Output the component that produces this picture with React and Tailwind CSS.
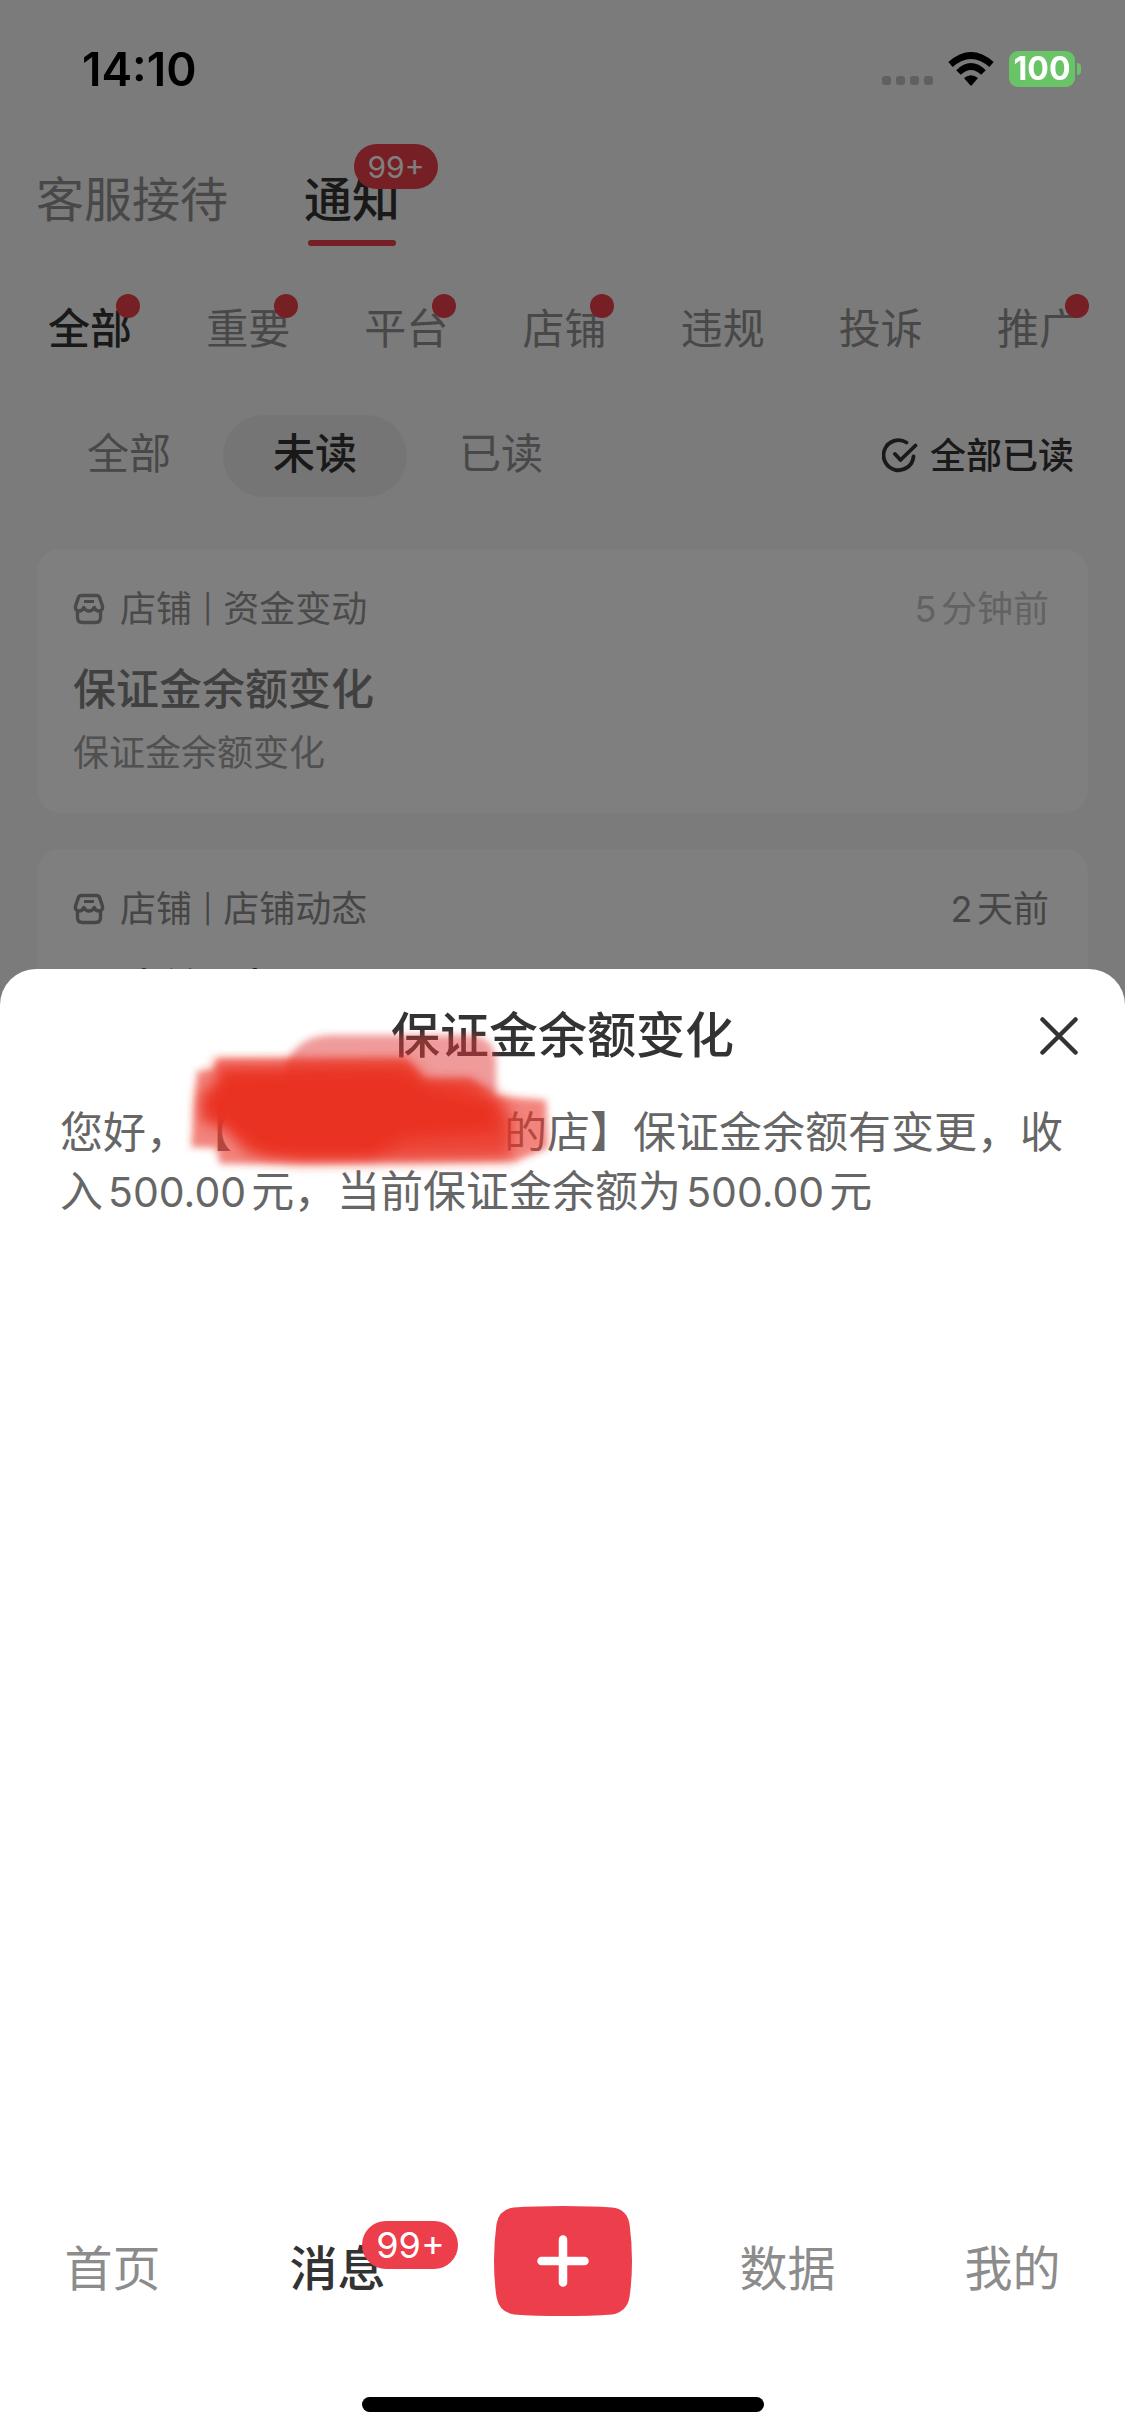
import { useId } from "react";
import clsx from "clsx";

const mainTabs = [
  { name: "客服接待" },
  { name: "通知", badge: "99+", active: true },
];

const categories = [
  { name: "全部", dot: true, active: true },
  { name: "重要", dot: true },
  { name: "平台", dot: true },
  { name: "店铺", dot: true },
  { name: "违规" },
  { name: "投诉" },
  { name: "推广", dot: true },
];

const filters = [
  { name: "全部" },
  { name: "未读", active: true },
  { name: "已读" },
];

const messages = [
  {
    source: "店铺",
    type: "资金变动",
    time: "5分钟前",
    title: "保证金余额变化",
    desc: "保证金余额变化",
    read: true,
  },
  {
    source: "店铺",
    type: "店铺动态",
    time: "2天前",
    title: "已读关于扣",
    desc: "店铺动态",
  },
];

const WifiIcon = () => (
  <svg viewBox="0 0 46 34" className="h-[34px] w-[46px]" aria-hidden="true">
    <g fill="none" stroke="#000" strokeWidth="6.5">
      <path d="M2.5 12.5 Q23 -5.5 43.5 12.5" />
      <path d="M10.5 20.5 Q23 8.5 35.5 20.5" />
    </g>
    <path d="M16 26 Q23 20.5 30 26 L24 33 Q23 34 22 33 Z" />
  </svg>
);

const ShopIcon = () => (
  <svg viewBox="0 0 32 32" className="h-8 w-8" fill="none" stroke="currentColor" strokeWidth="3.4" strokeLinejoin="round" strokeLinecap="round" aria-hidden="true">
    <path d="M8.500 2.500h15q2.500 0 3.200 2.400l2.900 8.600q.3 4-3.200 4.500-3.500.3-5.200-3.500-1.700 3.500-5.200 3.500t-5.200-3.500q-1.700 3.800-5.200 3.500-3.500-.5-3.200-4.500l2.900-8.600q.7-2.400 3.200-2.400z" />
    <path d="M4.500 18v6.500q0 5 5 5h13q5 0 5-5v-6.500" />
    <path d="M11 8.500h10" strokeWidth="3" strokeLinecap="butt" />
  </svg>
);

const CheckIcon = () => (
  <svg viewBox="0 0 36 36" className="h-9 w-9" fill="none" stroke="currentColor" strokeWidth="3.8" strokeLinecap="round" strokeLinejoin="round" aria-hidden="true">
    <path d="M24.500 4.500A15 15 0 1 0 31.500 18.500" />
    <path d="M13 16l5.500 6L33.500 7.500" />
  </svg>
);

const CloseIcon = () => (
  <svg viewBox="0 0 38 38" className="h-[38px] w-[38px]" fill="none" stroke="currentColor" strokeWidth="4.5" strokeLinecap="round" aria-hidden="true">
    <path d="M2.500 2.500l33 33M35.500 2.500l-33 33" />
  </svg>
);

const PlusIcon = () => (
  <svg viewBox="0 0 138 110" className="h-[110px] w-[138px]" aria-hidden="true">
    <path d="M69 0 Q97 0 118 1.500 Q133 3 135.500 18 Q138 36 138 55 Q138 74 135.500 91 Q133 106 118 108.500 Q97 110 69 110 Q41 110 20 108.500 Q5 106 2.500 91 Q0 74 0 55 Q0 36 2.500 18 Q5 3 20 1.500 Q41 0 69 0Z" fill="#ec3e4b" />
    <path d="M69 33.500v43M47.500 55h43" stroke="#fff" strokeWidth="8.500" strokeLinecap="round" />
  </svg>
);

// Marker strokes that hide the shop name
const Marker = () => {
  const id = useId();
  return (
    <svg viewBox="0 0 400 160" className="pointer-events-none absolute top-[51px] left-[170px] h-[160px] w-[400px]" aria-hidden="true">
      <filter id={`${id}-edge`} x="-10%" y="-10%" width="120%" height="120%">
        <feGaussianBlur stdDeviation="3.5" />
      </filter>
      <filter id={`${id}-core`} x="-10%" y="-20%" width="120%" height="140%">
        <feGaussianBlur stdDeviation="7" />
      </filter>
      <g filter={`url(#${id}-edge)`} fill="#ea3323">
        <path d="M116 42Q130 15 162 15H300Q322 16 326 38V74H116Z" fill="#e23a38" opacity="0.5" />
        <path d="M46 38H236L254 59 300 58 326 76 376 80 378 128 344 142 50 144 46 128 21 127 25 76 27 51 44 49Z" opacity="0.6" />
      </g>
      <g filter={`url(#${id}-core)`} fill="#ea3323">
        <path d="M44 44L240 42 256 60 300 62 332 78 344 100 340 138 130 142 76 134 54 108 30 102 29 74 46 62Z" opacity="0.75" />
        <path d="M56 52L228 50 258 66 325 80 330 112 235 118 200 140 96 138 66 116 36 98 36 76Z" />
      </g>
    </svg>
  );
};

const Badge = ({ children, className }) => (
  <span className={clsx("absolute flex items-center justify-center rounded-full bg-[#ec3e4b] text-white", className)}>
    {children}
  </span>
);

const MessageCard = ({ source, type, time, title, desc, read }) => (
  <article className="rounded-3xl bg-white py-9 pr-[39px] pl-9">
    <div className={clsx("flex items-center text-[36px] leading-[48px]", read ? "text-[#949494]" : "text-[#8c8c8c]")}>
      <ShopIcon />
      <span className="ml-[15px]">{source}</span>
      <span className="mx-[11px] text-[28px]">|</span>
      <span>{type}</span>
      <time className={clsx("ml-auto [text-autospace:normal]", read ? "text-[#c4c4c4]" : "text-[#8c8c8c]")}>{time}</time>
    </div>
    <h3 className={clsx("mt-[26px] text-[43px] leading-[60px] font-medium", read ? "text-[#808080]" : "text-[#333]")}>{title}</h3>
    <p className="mt-2.5 text-[36px] leading-[48px] text-[#a0a0a0]">{desc}</p>
  </article>
);

const NavItem = ({ name, active, badge }) => (
  <a
    href="#"
    className={clsx("flex flex-1 justify-center pt-4 text-[48px] leading-[60px]", active ? "font-medium text-[#333]" : "text-[#8c8c8c]")}
  >
    <span className="relative">
      {name}
      {badge && <Badge className="-top-[18px] left-[73px] h-12 w-24 text-[36px] font-normal">{badge}</Badge>}
    </span>
  </a>
);

const Amount = ({ children }) => <span className="mx-[5px] text-[41px]">{children}</span>;

export default function App() {
  return (
    <div className="relative min-h-screen bg-[#f6f6f6] font-[Inter,'Noto_Sans_CJK_SC',sans-serif] text-[#333]">
      {/* Status bar stays above the mask */}
      <header className="relative z-20 flex h-[138px] items-center justify-between pr-11 pl-[82px]">
        <span className="text-[46px] font-semibold text-black">14:10</span>
        <div className="flex items-center">
          <div className="flex gap-[5px] pt-[22px]">
            {[0, 1, 2, 3].map((i) => (
              <i key={i} className="h-[9px] w-[9px] rounded-[3px] bg-[#606060]" />
            ))}
          </div>
          <div className="mr-[15px] ml-[15px]">
            <WifiIcon />
          </div>
          <span className="flex h-9 w-[66px] items-center justify-center rounded-[9px] bg-[#68c466] text-[32px] font-bold text-white">100</span>
          <i className="ml-0.5 h-3 w-1 rounded-r-full bg-[#68c466]" />
        </div>
      </header>

      <main>
        <nav className="flex gap-[76px] px-9 pt-8 text-[48px] leading-[60px]">
          {mainTabs.map((tab) => (
            <button key={tab.name} className={clsx("relative flex flex-col items-center", tab.active ? "font-medium" : "text-[#909090]")}>
              {tab.name}
              {tab.active && <i className="mt-2.5 h-1.5 w-[88px] rounded-full bg-[#ec3e4b]" />}
              {tab.badge && <Badge className="-top-[26px] left-[50px] h-[45px] w-[84px] text-[30px] font-normal">{tab.badge}</Badge>}
            </button>
          ))}
        </nav>

        <nav className="mt-[53px] flex justify-between pr-11 pl-12 text-[42px] leading-[60px]">
          {categories.map((c) => (
            <button key={c.name} className={clsx("relative", c.active ? "font-medium" : "text-[#909090]")}>
              {c.name}
              {c.dot && <i className="absolute -top-[5px] -right-2 h-6 w-6 rounded-full bg-[#ec3e4b]" />}
            </button>
          ))}
        </nav>

        <div className="mt-14 flex items-center pr-[51px] pl-[37px]">
          <div className="flex gap-0.5">
            {filters.map((f) => (
              <button
                key={f.name}
                className={clsx("h-[82px] rounded-full px-[50px] pb-1.5 text-[42px]", f.active ? "bg-[#ebebeb] font-medium" : "text-[#909090]")}
              >
                {f.name}
              </button>
            ))}
          </div>
          <button className="ml-auto flex items-center gap-3 text-[36px] font-medium">
            <CheckIcon />
            全部已读
          </button>
        </div>

        <section className="mt-[52px] flex flex-col gap-9 px-[37px]">
          {messages.map((m) => (
            <MessageCard key={m.title} {...m} />
          ))}
        </section>
      </main>

      <div className="fixed inset-0 z-10 flex flex-col justify-end bg-black/50">
        <div role="dialog" aria-labelledby="sheet-title" className="relative flex min-h-[1467px] flex-col rounded-t-[36px] bg-white">
          <div className="flex items-center justify-center py-8">
            <h2 id="sheet-title" className="text-[49px] leading-[70px] font-medium">保证金余额变化</h2>
            <button aria-label="关闭" className="absolute right-[47px]">
              <CloseIcon />
            </button>
          </div>
          <p className="px-[60px] text-[43px] leading-[59px] text-[#666] [text-spacing-trim:space-all]">
            您好，【
            <span className="inline-block w-[272px]" />
            的店】保证金余额有变更，收入<Amount>500.00</Amount>元，当前保证金余额为<Amount>500.00</Amount>元
          </p>
          <Marker />

          <footer className="mt-auto pb-6">
            <nav className="flex items-center pb-[81px]">
              <NavItem name="首页" />
              <NavItem name="消息" badge="99+" active />
              <button aria-label="新增" className="flex flex-1 justify-center">
                <PlusIcon />
              </button>
              <NavItem name="数据" />
              <NavItem name="我的" />
            </nav>
            <div className="mx-auto h-[15px] w-[402px] rounded-full bg-black" />
          </footer>
        </div>
      </div>
    </div>
  );
}
